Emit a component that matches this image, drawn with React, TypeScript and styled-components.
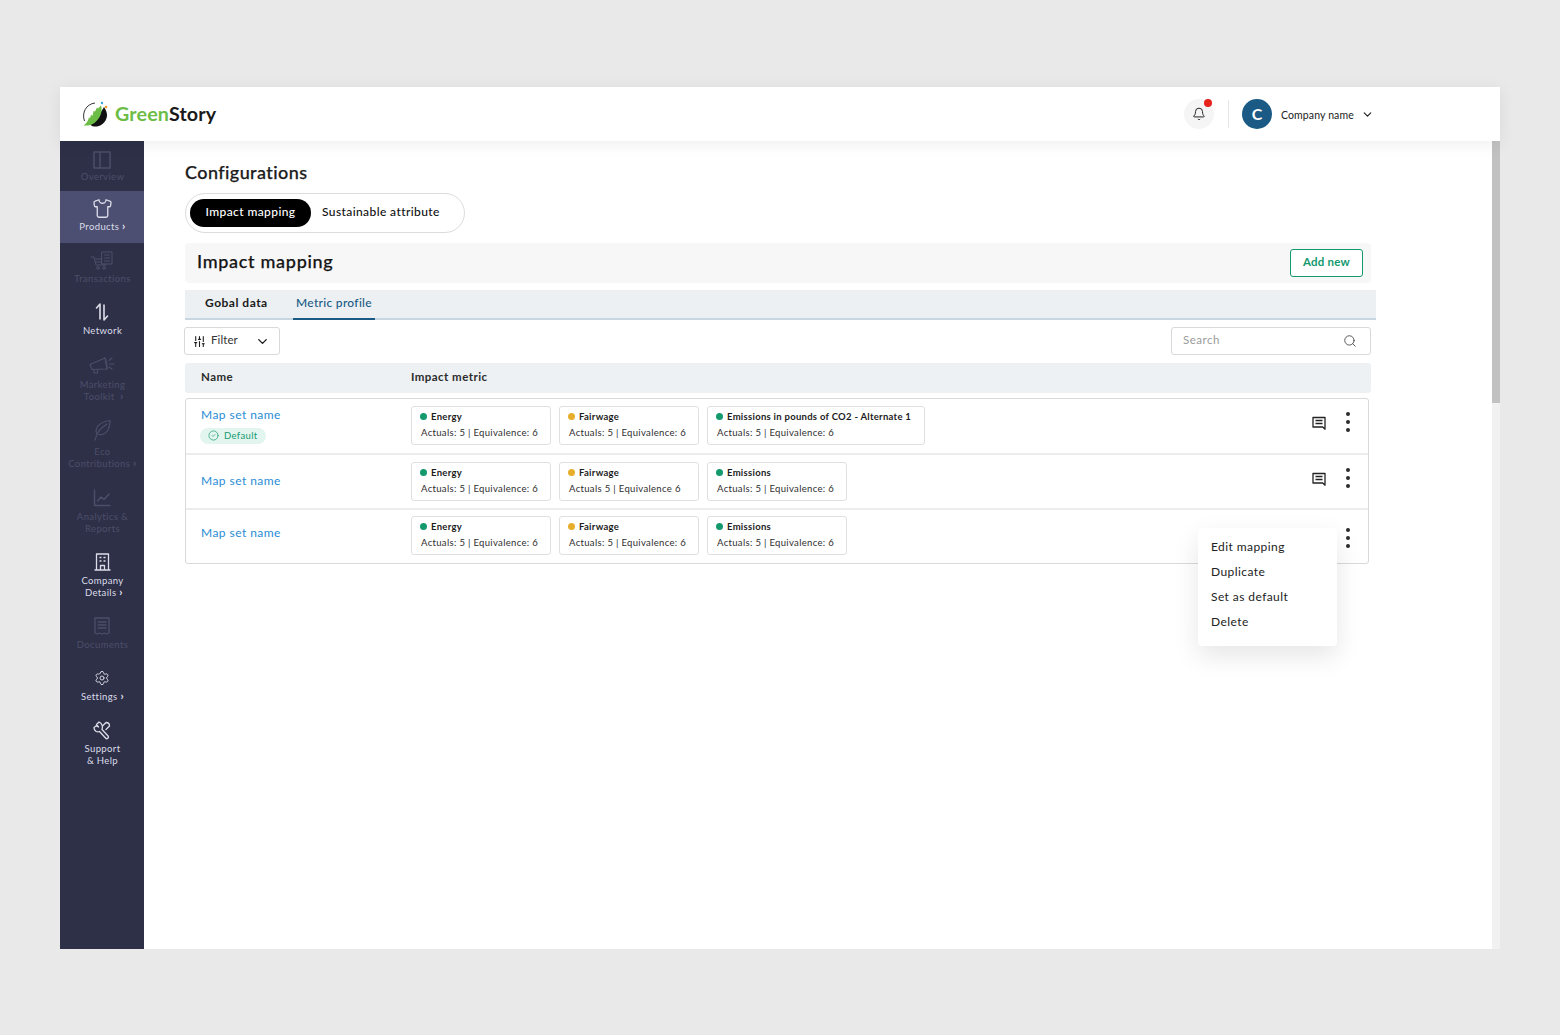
import React from "react";
import styled, { createGlobalStyle } from "styled-components";
import { Bell, ChevronDown, Search, Settings, Shirt, SlidersVertical, CircleCheck } from "lucide-react";

const Global = createGlobalStyle`
  html, body { margin: 0; padding: 0; background: #e9e9e9; }
  * { box-sizing: border-box; }
  body { font-family: "Lato", "Noto Sans", sans-serif; color: #111; }
`;

const Page = styled.div`
  height: 1035px;
  padding: 87px 60px 86px;
  overflow: hidden;
`;
const Frame = styled.div`
  height: 862px;
  background: #fff;
  display: flex;
  flex-direction: column;
`;
const Header = styled.header`
  height: 54px;
  flex: none;
  display: flex;
  align-items: center;
  padding: 0 126px 0 22px;
  background: #fff;
  box-shadow: 0 3px 16px rgba(0, 0, 0, 0.07);
  position: relative;
  z-index: 2;
`;
const Logo = styled.div`
  display: flex;
  align-items: center;
  gap: 6px;
`;
const LogoWord = styled.span`
  font-size: 19.7px;
  font-weight: 700;
  letter-spacing: 0.15px;
  color: #1a1a1a;
  padding-bottom: 2px;
  & > em { font-style: normal; color: #6cbd45; }
`;
const HeaderRight = styled.div`
  margin-left: auto;
  display: flex;
  align-items: center;
  color: #222;
`;
const BellWrap = styled.div`
  width: 30px;
  height: 30px;
  border-radius: 50%;
  background: #f5f5f5;
  display: flex;
  align-items: center;
  justify-content: center;
  position: relative;
`;
const RedDot = styled.span`
  position: absolute;
  top: 0;
  right: 2px;
  width: 8px;
  height: 8px;
  border-radius: 50%;
  background: #e8231a;
`;
const VLine = styled.div`
  width: 1px;
  height: 28px;
  background: #e6e6e6;
  margin: 0 13px 0 14px;
`;
const Avatar = styled.div`
  width: 30px;
  height: 30px;
  border-radius: 50%;
  background: #1a5a85;
  color: #fff;
  font-size: 16px;
  font-weight: 700;
  padding-bottom: 2px;
  display: flex;
  align-items: center;
  justify-content: center;
`;
const CompanyName = styled.span`
  font-size: 10.5px;
  letter-spacing: 0.12px;
  margin: 2px 7px 0 9px;
  width: 73px;
  white-space: nowrap;
`;
const Body = styled.div`
  flex: 1;
  display: flex;
  min-height: 0;
`;
const Side = styled.nav`
  width: 84px;
  flex: none;
  background: #2e3048;
`;
const NavItem = styled.div<{ $h: number; $pt: number; $gap: number; $on?: boolean; $off?: boolean }>`
  height: ${(p) => p.$h}px;
  padding-top: ${(p) => p.$pt}px;
  background: ${(p) => (p.$on ? "#4d4f72" : "transparent")};
  color: ${(p) => (p.$off ? "#4c4e68" : "#dcdde8")};
  display: flex;
  flex-direction: column;
  align-items: center;
  gap: ${(p) => p.$gap}px;
`;
const NavIcon = styled.div`
  width: 22px;
  height: 20px;
  display: flex;
  align-items: center;
  justify-content: center;
  & > svg { flex: none; }
`;
const NavLabel = styled.div`
  margin-left: 1px;
`;
const NavLine = styled.div`
  font-size: 9.5px;
  line-height: 12px;
  height: 12px;
  letter-spacing: 0.38px;
  text-align: center;
  white-space: pre;
`;
const NavArrow = styled.span`
  font-weight: 900;
  font-size: 11px;
  line-height: 10px;
`;
const Main = styled.main`
  flex: 1;
  padding: 20px 116px 0 41px;
  position: relative;
  min-width: 0;
`;
const Title = styled.h1`
  margin: 0;
  font-size: 18px;
  line-height: 22px;
  font-weight: 500;
  letter-spacing: 0.42px;
  -webkit-text-stroke: 0.25px #1b1b1b;
  color: #1b1b1b;
`;
const Pills = styled.div`
  margin-top: 10px;
  width: 280px;
  height: 40px;
  border: 1px solid #dcdcdc;
  border-radius: 20px;
  padding: 5px 4px;
  display: flex;
  align-items: center;
`;
const Pill = styled.div<{ $on?: boolean }>`
  height: 28px;
  width: ${(p) => (p.$on ? "121px" : "auto")};
  padding: ${(p) => (p.$on ? "0 0 3px" : "0 0 3px 11px")};
  border-radius: 14px;
  background: ${(p) => (p.$on ? "#000" : "transparent")};
  color: ${(p) => (p.$on ? "#fff" : "#111")};
  font-size: 12px;
  font-weight: 500;
  letter-spacing: 0.4px;
  display: flex;
  align-items: center;
  justify-content: center;
  white-space: nowrap;
`;
const SectionBar = styled.div`
  margin-top: 10px;
  width: 1186px;
  height: 40px;
  background: #f7f7f7;
  border-radius: 4px;
  padding: 0 8px 0 12px;
  display: flex;
  align-items: center;
  justify-content: space-between;
`;
const SectionTitle = styled.h2`
  margin: 0 0 5px;
  font-size: 18px;
  font-weight: 500;
  letter-spacing: 0.7px;
  -webkit-text-stroke: 0.25px #151515;
  color: #151515;
`;
const AddBtn = styled.button`
  width: 73px;
  height: 28px;
  border: 1px solid #14996f;
  border-radius: 3px;
  background: #fff;
  color: #14996f;
  font-family: inherit;
  font-size: 11.5px;
  font-weight: 700;
  letter-spacing: 0.2px;
  padding: 0 0 3px;
`;
const Tabs = styled.div`
  margin-top: 7px;
  width: 1191px;
  height: 30px;
  background: #ecf0f3;
  border-bottom: 2px solid #c8d6e2;
  display: flex;
  padding-left: 8px;
`;
const Tab = styled.div<{ $on?: boolean; $w: number }>`
  width: ${(p) => p.$w}px;
  height: 30px;
  font-size: 12px;
  font-weight: ${(p) => (p.$on ? 500 : 700)};
  letter-spacing: ${(p) => (p.$on ? 0.3 : 0.5)}px;
  color: ${(p) => (p.$on ? "#1a5a85" : "#1b1b1b")};
  border-bottom: 2px solid ${(p) => (p.$on ? "#1a5a85" : "transparent")};
  padding-left: ${(p) => (p.$on ? 3 : 12)}px;
  line-height: 26px;
  white-space: nowrap;
`;
const Tools = styled.div`
  margin: 7px 0 0 -1px;
  width: 1187px;
  height: 28px;
  display: flex;
  justify-content: space-between;
`;
const FilterBox = styled.div`
  width: 96px;
  border: 1px solid #d9d9d9;
  border-radius: 3px;
  display: flex;
  align-items: center;
  padding: 0 9px 0 8px;
  gap: 5px;
  font-size: 11.5px;
  letter-spacing: 0.1px;
  color: #333;
  & > span { flex: 1; padding-bottom: 3px; }
  & > svg { color: #1c1c1c; }
`;
const SearchBox = styled.div`
  width: 200px;
  border: 1px solid #d9d9d9;
  border-radius: 3px;
  display: flex;
  align-items: center;
  justify-content: space-between;
  padding: 0 13px 0 11px;
  font-size: 11.5px;
  letter-spacing: 0.5px;
  color: #9b9b9b;
  & > span { padding-bottom: 3px; }
`;
const TableHead = styled.div`
  margin-top: 8px;
  width: 1186px;
  height: 30px;
  background: #edf1f4;
  border-radius: 3px;
  display: flex;
  align-items: center;
  font-size: 11.5px;
  font-weight: 700;
  letter-spacing: 0.45px;
  color: #2c2c2c;
  padding: 0 0 3px 16px;
  & > span:first-child { width: 210px; }
`;
const RowsBox = styled.div`
  margin-top: 5px;
  width: 1184px;
  border: 1px solid #d9d9d9;
  border-radius: 3px;
  position: relative;
`;
const Row = styled.div<{ $h: number; $pt: number; $line?: boolean }>`
  height: ${(p) => p.$h}px;
  padding: ${(p) => p.$pt}px 18px 0 15px;
  border-bottom: ${(p) => (p.$line ? "2px solid #ececec" : "none")};
  display: flex;
  align-items: flex-start;
`;
const NameCell = styled.div<{ $pt: number }>`
  width: 210px;
  flex: none;
  padding-top: ${(p) => p.$pt}px;
`;
const MapLink = styled.a`
  display: block;
  font-size: 12px;
  line-height: 16px;
  letter-spacing: 0.45px;
  color: #2a8cd4;
`;
const Badge = styled.span`
  margin-top: 5px;
  margin-left: -1px;
  width: 66px;
  height: 16px;
  border-radius: 8px;
  background: #e3f5ef;
  color: #14996f;
  font-size: 9.5px;
  letter-spacing: 0.35px;
  display: flex;
  align-items: center;
  gap: 5px;
  padding: 0 0 1px 8px;
`;
const Chips = styled.div`
  display: flex;
  gap: 8px;
  flex: 1;
`;
const Chip = styled.div<{ $w: number }>`
  width: ${(p) => p.$w}px;
  height: 39px;
  border: 1px solid #e0e0e0;
  border-radius: 3px;
  padding: 3px 0 0 8px;
`;
const ChipTitle = styled.div`
  display: flex;
  align-items: center;
  gap: 4px;
  font-size: 9.5px;
  line-height: 13px;
  font-weight: 700;
  letter-spacing: 0.28px;
  color: #1c1c1c;
  white-space: nowrap;
`;
const Dot = styled.i<{ $c: string }>`
  width: 7px;
  height: 7px;
  border-radius: 50%;
  background: ${(p) => p.$c};
`;
const ChipText = styled.div`
  margin-top: 3px;
  margin-left: 1px;
  font-size: 9.5px;
  line-height: 13px;
  letter-spacing: 0.33px;
  color: #2e2e2e;
  white-space: nowrap;
`;
const Actions = styled.div<{ $mt: number }>`
  display: flex;
  align-items: flex-start;
  gap: 20px;
  margin-top: ${(p) => p.$mt}px;
`;
const Kebab = styled.div`
  width: 4px;
  display: flex;
  flex-direction: column;
  gap: 4px;
  & > i { width: 4px; height: 4px; border-radius: 50%; background: #2b2b2b; }
`;
const CommentWrap = styled.div`
  margin-top: 4px;
  display: flex;
`;
const Menu = styled.div`
  position: absolute;
  left: 1012px;
  top: 129px;
  width: 139px;
  height: 118px;
  background: #fff;
  border-radius: 4px;
  box-shadow: 0 10px 26px rgba(0, 0, 0, 0.1);
  padding: 6px 0 0 13px;
  z-index: 3;
`;
const MenuItem = styled.div`
  height: 25px;
  line-height: 25px;
  font-size: 12px;
  letter-spacing: 0.42px;
  color: #222;
`;
const ScrollTrack = styled.div`
  width: 8px;
  flex: none;
  background: #f1f1f1;
`;
const ScrollThumb = styled.div`
  height: 262px;
  background: #c1c1c1;
`;

const S = { fill: "none", stroke: "currentColor", strokeWidth: 1.5, strokeLinecap: "round" as const, strokeLinejoin: "round" as const };

const LogoMark = () => (
  <svg width="27" height="27" viewBox="0 0 27 27">
    <path d="M2.5 20C-.5 12 4 3 13 2" fill="none" stroke="#333" strokeWidth="1" />
    <path d="M12 25.5C17 26 24 23 25 15c.3-3-1-6-3-9-3 5-7 11-14 17 1 1.500 2 2.300 4 2.500z" fill="#111" />
    <path d="M1.500 24.500C5 22 6 20 7 16l1 1.500 1-4 1.500 1.500 1-5 1.500 .5 2-4 1 1 3-3c2 6-1 13-6 17-3 2.500-6 3-9.500 3z" fill="#6cbd45" />
    <circle cx="20" cy="2" r="1.200" fill="#35a7dc" />
    <circle cx="24" cy="6" r="1.300" fill="#f09a2a" />
  </svg>
);
const IcOverview = () => (
  <svg width="18" height="18" viewBox="0 0 18 18" {...S}><rect x="1" y="1" width="16" height="16" /><path d="M7 1v16" /></svg>
);
const IcCart = () => (
  <svg width="24" height="20" viewBox="0 0 24 20" {...S} strokeWidth={1}>
    <path d="M1 6h3l2 8h10" /><path d="M5 8h7" /><path d="M5.500 11h6" /><path d="M14 14v-1" />
    <path d="M12 1h10v12H12z" /><path d="M14.500 4h5M14.500 7h5M14.500 10h5" /><circle cx="8" cy="17" r="1.300" /><circle cx="14" cy="17" r="1.300" />
  </svg>
);
const IcNetwork = () => (
  <svg width="16" height="20" viewBox="0 0 16 20" {...S} strokeWidth={1.6}>
    <path d="M6 17V2L2.500 6" /><path d="M10 3v15l3.500-4" />
  </svg>
);
const IcMegaphone = () => (
  <svg width="27" height="18" viewBox="0 0 27 18" {...S} strokeWidth={1.1}>
    <path d="M1 8.500 16 2l2 11L3 13.500z" /><path d="M16 2c1.500 3 2 8 2 11" /><path d="M5 13.500V17h3.500v-3.500" />
    <path d="M20 4.500l3-2.500M20.500 8H25M20 11l3 2" />
  </svg>
);
const IcFeather = () => (
  <svg width="20" height="22" viewBox="0 0 20 22" {...S} strokeWidth={1.2}>
    <path d="M3 21C4 17 6 14 7 12" /><path d="M5 15C2 9 7 3 18 1.500c0 9-4 15-11 14" /><path d="M7 12c2-3 5-5 8-7" />
  </svg>
);
const IcChart = () => (
  <svg width="18" height="18" viewBox="0 0 18 18" {...S}>
    <path d="M1.500 1v15.500H17" /><path d="M4.500 12l3.500-4 3 2.500L16 5" />
  </svg>
);
const IcBuilding = () => (
  <svg width="17" height="18" viewBox="0 0 17 18" {...S} strokeWidth={1.3} strokeLinecap="butt">
    <path d="M2.500 17V1h12v16" /><path d="M.5 17h16M6.500 17v-4.500h4V17" />
    <path d="M5.500 4.500h2M9.500 4.500h2M5.500 8h2M9.500 8h2" strokeWidth={1.7} />
  </svg>
);
const IcDoc = () => (
  <svg width="16" height="18" viewBox="0 0 16 18" {...S} strokeWidth={1.3}>
    <path d="M1 16V1h14v15l-2.300 1-2.300-1-2.400 1-2.400-1-2.300 1z" /><path d="M4 5h8M4 8h8M4 11h8" />
  </svg>
);
const IcSupport = () => (
  <svg width="18" height="19" viewBox="0 0 18 19" {...S} strokeWidth={1.3}>
    <path d="M6 1 3.500 3.500 5.500 6 3 5 1 6.500C1 10 4 11.500 6.500 10.500l6.500 7c1 .8 3-.8 2.300-2.300L9 8.500C10 5.500 9 2.500 6 1z" />
    <path d="M9.500 5 13 1.500c2 0 3.500 1.500 3.500 3.500L13 8.500" />
  </svg>
);
const IcComment = () => (
  <svg width="14" height="14" viewBox="0 0 14 14" fill="none" stroke="#222" strokeWidth="1.3" strokeLinejoin="round">
    <path d="M1 1.500h12v9.500v2.200l-2.200-2.200H1z" /><path d="M3.500 4.500h7M3.500 7.500h7" />
  </svg>
);

type NavT = { lines: string[]; arrow?: boolean; icon: React.ReactNode; h: number; pt: number; gap: number; on?: boolean; off?: boolean };
const nav: NavT[] = [
  { lines: ["Overview"], icon: <IcOverview />, h: 50, pt: 9, gap: 1, off: true },
  { lines: ["Products "], arrow: true, icon: <Shirt size={21} strokeWidth={1.5} />, h: 52, pt: 7, gap: 3, on: true },
  { lines: ["Transactions"], icon: <IcCart />, h: 52, pt: 8, gap: 2, off: true },
  { lines: ["Network"], icon: <IcNetwork />, h: 52, pt: 7, gap: 3 },
  { lines: ["Marketing", " Toolkit  "], arrow: true, icon: <IcMegaphone />, h: 65, pt: 8, gap: 4, off: true },
  { lines: ["Eco", "Contributions "], arrow: true, icon: <IcFeather />, h: 68, pt: 8, gap: 6, off: true },
  { lines: ["Analytics &", "Reports"], icon: <IcChart />, h: 64, pt: 8, gap: 3, off: true },
  { lines: ["Company", " Details "], arrow: true, icon: <IcBuilding />, h: 64, pt: 8, gap: 3 },
  { lines: ["Documents"], icon: <IcDoc />, h: 52, pt: 8, gap: 3, off: true },
  { lines: ["Settings "], arrow: true, icon: <Settings size={16} strokeWidth={1.4} />, h: 52, pt: 8, gap: 3 },
  { lines: ["Support", "& Help"], icon: <IcSupport />, h: 64, pt: 8, gap: 3 },
];

type ChipT = { t: string; c: string; d: string; w: number };
const G = "#14996f";
const Y = "#e6ae2c";
const rows: { chips: ChipT[]; h: number; pt: number; namePt: number; def?: boolean; line?: boolean; actMt: number }[] = [
  {
    h: 56, pt: 7, namePt: 1, def: true, line: true, actMt: 6,
    chips: [
      { t: "Energy", c: G, d: "Actuals: 5 | Equivalence: 6", w: 140 },
      { t: "Fairwage", c: Y, d: "Actuals: 5 | Equivalence: 6", w: 140 },
      { t: "Emissions in pounds of CO2 - Alternate 1", c: G, d: "Actuals: 5 | Equivalence: 6", w: 218 },
    ],
  },
  {
    h: 55, pt: 7, namePt: 11, line: true, actMt: 6,
    chips: [
      { t: "Energy", c: G, d: "Actuals: 5 | Equivalence: 6", w: 140 },
      { t: "Fairwage", c: Y, d: "Actuals 5 | Equivalence 6", w: 140 },
      { t: "Emissions", c: G, d: "Actuals: 5 | Equivalence: 6", w: 140 },
    ],
  },
  {
    h: 53, pt: 6, namePt: 9, actMt: 12,
    chips: [
      { t: "Energy", c: G, d: "Actuals: 5 | Equivalence: 6", w: 140 },
      { t: "Fairwage", c: Y, d: "Actuals: 5 | Equivalence: 6", w: 140 },
      { t: "Emissions", c: G, d: "Actuals: 5 | Equivalence: 6", w: 140 },
    ],
  },
];

export default function App() {
  return (
    <Page>
      <Global />
      <Frame>
        <Header>
          <Logo>
            <LogoMark />
            <LogoWord><em>Green</em>Story</LogoWord>
          </Logo>
          <HeaderRight>
            <BellWrap>
              <Bell size={14} strokeWidth={1.7} />
              <RedDot />
            </BellWrap>
            <VLine />
            <Avatar>C</Avatar>
            <CompanyName>Company name</CompanyName>
            <ChevronDown size={13} strokeWidth={2.2} />
          </HeaderRight>
        </Header>
        <Body>
          <Side>
            {nav.map((n) => (
              <NavItem key={n.lines[0]} $h={n.h} $pt={n.pt} $gap={n.gap} $on={n.on} $off={n.off}>
                <NavIcon>{n.icon}</NavIcon>
                <NavLabel>
                  {n.lines.map((l, i) => (
                    <NavLine key={i}>
                      {l}
                      {n.arrow && i === n.lines.length - 1 && <NavArrow>›</NavArrow>}
                    </NavLine>
                  ))}
                </NavLabel>
              </NavItem>
            ))}
          </Side>
          <Main>
            <Title>Configurations</Title>
            <Pills>
              <Pill $on>Impact mapping</Pill>
              <Pill>Sustainable attribute</Pill>
            </Pills>
            <SectionBar>
              <SectionTitle>Impact mapping</SectionTitle>
              <AddBtn>Add new</AddBtn>
            </SectionBar>
            <Tabs>
              <Tab $w={100}>Gobal data</Tab>
              <Tab $on $w={82}>Metric profile</Tab>
            </Tabs>
            <Tools>
              <FilterBox>
                <SlidersVertical size={13} strokeWidth={2} />
                <span>Filter</span>
                <ChevronDown size={15} strokeWidth={2.2} />
              </FilterBox>
              <SearchBox>
                <span>Search</span>
                <Search size={14} strokeWidth={1.5} color="#444" />
              </SearchBox>
            </Tools>
            <TableHead>
              <span>Name</span>
              <span>Impact metric</span>
            </TableHead>
            <RowsBox>
              {rows.map((r, i) => (
                <Row key={i} $h={r.h} $pt={r.pt} $line={r.line}>
                  <NameCell $pt={r.namePt}>
                    <MapLink>Map set name</MapLink>
                    {r.def && (
                      <Badge>
                        <CircleCheck size={11} strokeWidth={1.5} />
                        Default
                      </Badge>
                    )}
                  </NameCell>
                  <Chips>
                    {r.chips.map((c) => (
                      <Chip key={c.t} $w={c.w}>
                        <ChipTitle><Dot $c={c.c} />{c.t}</ChipTitle>
                        <ChipText>{c.d}</ChipText>
                      </Chip>
                    ))}
                  </Chips>
                  <Actions $mt={r.actMt}>
                    <CommentWrap><IcComment /></CommentWrap>
                    <Kebab><i /><i /><i /></Kebab>
                  </Actions>
                </Row>
              ))}
              <Menu>
                <MenuItem>Edit mapping</MenuItem>
                <MenuItem>Duplicate</MenuItem>
                <MenuItem>Set as default</MenuItem>
                <MenuItem>Delete</MenuItem>
              </Menu>
            </RowsBox>
          </Main>
          <ScrollTrack><ScrollThumb /></ScrollTrack>
        </Body>
      </Frame>
    </Page>
  );
}
